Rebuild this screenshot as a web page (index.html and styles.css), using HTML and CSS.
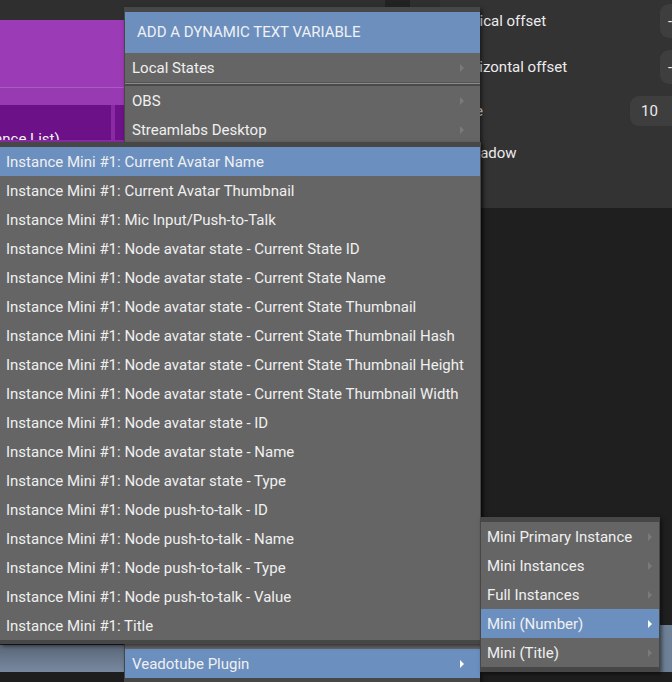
FILE: index.html
```html
<!DOCTYPE html>
<html>
<head>
<meta charset="utf-8">
<link rel="stylesheet" href="styles.css">
</head>
<body>
<div class="app">
  <div class="left">
    <div class="topbar"><span class="notch"></span></div>
    <div class="card">
      <div class="card-head"></div>
      <div class="card-line"></div>
      <div class="card-band"></div>
      <div class="card-body">
        <div class="cell-main"><span class="cell-text">(Instance List)</span></div>
        <div class="cell-divider"></div>
        <div class="cell-side"></div>
      </div>
      <div class="card-foot"></div>
    </div>
    <div class="fill"></div>
    <div class="statusbar"></div>
    <div class="bottom"></div>
  </div>
  <div class="right">
    <div class="props">
      <div class="prop prop-tall first">
        <span class="prop-label">Vertical offset</span>
        <span class="prop-input wide">-</span>
      </div>
      <div class="prop prop-tall">
        <span class="prop-label lab-h">Horizontal offset</span>
        <span class="prop-input wide">-</span>
      </div>
      <div class="prop">
        <span class="prop-label lab-s">Size</span>
        <span class="prop-input num">10</span>
      </div>
      <div class="prop">
        <span class="prop-label lab-sh">Shadow</span>
      </div>
    </div>
    <div class="fill"></div>
    <div class="rbar"></div>
    <div class="bottom"></div>
  </div>
</div>

<div class="menu main-menu">
  <div class="menu-header">Add a dynamic text variable</div>
  <div class="item">Local States<span class="arrow"></span></div>
  <div class="sep"></div>
  <div class="item">OBS<span class="arrow"></span></div>
  <div class="item">Streamlabs Desktop<span class="arrow"></span></div>
  <div class="spacer"></div>
  <div class="item active">Veadotube Plugin<span class="arrow"></span></div>
</div>

<div class="menu sub-menu">
  <div class="item active">Instance Mini #1: Current Avatar Name</div>
  <div class="item">Instance Mini #1: Current Avatar Thumbnail</div>
  <div class="item">Instance Mini #1: Mic Input/Push-to-Talk</div>
  <div class="item">Instance Mini #1: Node avatar state - Current State ID</div>
  <div class="item">Instance Mini #1: Node avatar state - Current State Name</div>
  <div class="item">Instance Mini #1: Node avatar state - Current State Thumbnail</div>
  <div class="item">Instance Mini #1: Node avatar state - Current State Thumbnail Hash</div>
  <div class="item">Instance Mini #1: Node avatar state - Current State Thumbnail Height</div>
  <div class="item">Instance Mini #1: Node avatar state - Current State Thumbnail Width</div>
  <div class="item">Instance Mini #1: Node avatar state - ID</div>
  <div class="item">Instance Mini #1: Node avatar state - Name</div>
  <div class="item">Instance Mini #1: Node avatar state - Type</div>
  <div class="item">Instance Mini #1: Node push-to-talk - ID</div>
  <div class="item">Instance Mini #1: Node push-to-talk - Name</div>
  <div class="item">Instance Mini #1: Node push-to-talk - Type</div>
  <div class="item">Instance Mini #1: Node push-to-talk - Value</div>
  <div class="item">Instance Mini #1: Title</div>
</div>

<div class="menu sub-menu2">
  <div class="item">Mini Primary Instance<span class="arrow"></span></div>
  <div class="item">Mini Instances<span class="arrow"></span></div>
  <div class="item">Full Instances<span class="arrow"></span></div>
  <div class="item active">Mini (Number)<span class="arrow"></span></div>
  <div class="item">Mini (Title)<span class="arrow"></span></div>
</div>
</body>
</html>
```

FILE: styles.css
```css
* { box-sizing: border-box; }

html, body {
  margin: 0;
  padding: 0;
  width: 672px;
  height: 682px;
  overflow: hidden;
  background: #1f1f1f;
  font-family: Roboto, "Liberation Sans", sans-serif;
  font-size: 15px;
  color: #f0f0f0;
}

.app {
  display: flex;
  width: 740px;
  height: 682px;
}

.left {
  flex: 0 0 440px;
  display: flex;
  flex-direction: column;
}

.right {
  flex: 0 0 300px;
  display: flex;
  flex-direction: column;
}

.topbar {
  height: 20px;
  background: #2f2f2f;
  display: flex;
  padding-left: 385px;
}

.notch {
  width: 25px;
  height: 10px;
  background: #222;
}

.card { display: flex; flex-direction: column; }
.card-head { height: 67px; background: #9b3bb5; }
.card-line { height: 1px; background: #ad5ac4; }
.card-band { height: 17px; background: #983ab2; }
.card-body { height: 35px; display: flex; background: #6c1187; overflow: hidden; }
.cell-main {
  width: 111px;
  display: flex;
  align-items: flex-end;
  overflow: hidden;
}
.cell-text {
  margin-left: -36px;
  margin-bottom: -7px;
  white-space: nowrap;
  color: #f4f4f4;
  line-height: 16px;
}
.cell-divider { width: 4px; background: #8a2aa5; }
.cell-side { flex: 1; background: #6e128a; }
.card-foot { height: 2px; background: #8c2ca8; }

.fill { flex: 1; background: #1f1f1f; }
.statusbar { height: 27px; background: linear-gradient(#5a6677, #7889a0); }
.bottom { height: 10px; background: #1e1e1e; }

.props {
  height: 208px;
  background: #333;
  display: flex;
  flex-direction: column;
}

.prop {
  display: flex;
  align-items: center;
  justify-content: space-between;
  height: 30px;
  margin-top: 12px;
}
.prop.first { margin-top: 4px; }
.prop-tall { height: 34px; }

.prop-label {
  padding-left: 12px;
  white-space: nowrap;
  color: #ececec;
}
.lab-h { padding-left: 15px; }
.lab-s { padding-left: 15px; }
.lab-sh { padding-left: 23px; }

.prop-input {
  height: 100%;
  background: #3e3e3e;
  border-radius: 9px;
  display: flex;
  align-items: center;
  color: #ececec;
}
.prop-input.wide { width: 80px; padding-left: 8px; }
.prop-input.num { width: 110px; padding-left: 11px; }

.rbar { height: 47px; background: #6e8197; }

/* menus */
.menu {
  position: absolute;
  background: #656565;
  border: 0 solid #474747;
  box-shadow: 2px 2px 4px rgba(0, 0, 0, 0.5);
}

.main-menu {
  left: 124px;
  top: 7px;
  width: 356px;
  border-left-width: 1px;
  border-top-width: 5px;
  border-bottom-width: 4px;
}

.sub-menu {
  left: 0;
  top: 142px;
  width: 481px;
  border-right-width: 1px;
  border-top-width: 5px;
  border-bottom-width: 4px;
}

.sub-menu2 {
  left: 480px;
  top: 517px;
  width: 180px;
  border-width: 5px 1px;
}

.menu-header {
  height: 41px;
  line-height: 41px;
  padding-left: 12px;
  background: #6d8fbd;
  text-transform: uppercase;
  color: #eef2f7;
  white-space: nowrap;
}

.item {
  height: 29px;
  display: flex;
  align-items: center;
  justify-content: space-between;
  padding: 0 16px 0 7px;
  white-space: nowrap;
  color: #f0f0f0;
}
.sub-menu .item { padding-left: 6px; }
.sub-menu2 .item { padding: 0 7px 0 6px; }

.item.active { background: #6b8fbf; }

.arrow {
  width: 0;
  height: 0;
  border-left: 4px solid #7a7a7a;
  border-top: 4px solid transparent;
  border-bottom: 4px solid transparent;
}
.item.active .arrow { border-left-color: #ffffff; }

.sep {
  height: 4px;
  border-top: 1px solid #555;
  background: #8a8a8a;
  border-bottom: 2px solid #4a4a4a;
}

.spacer { height: 505px; }
```
